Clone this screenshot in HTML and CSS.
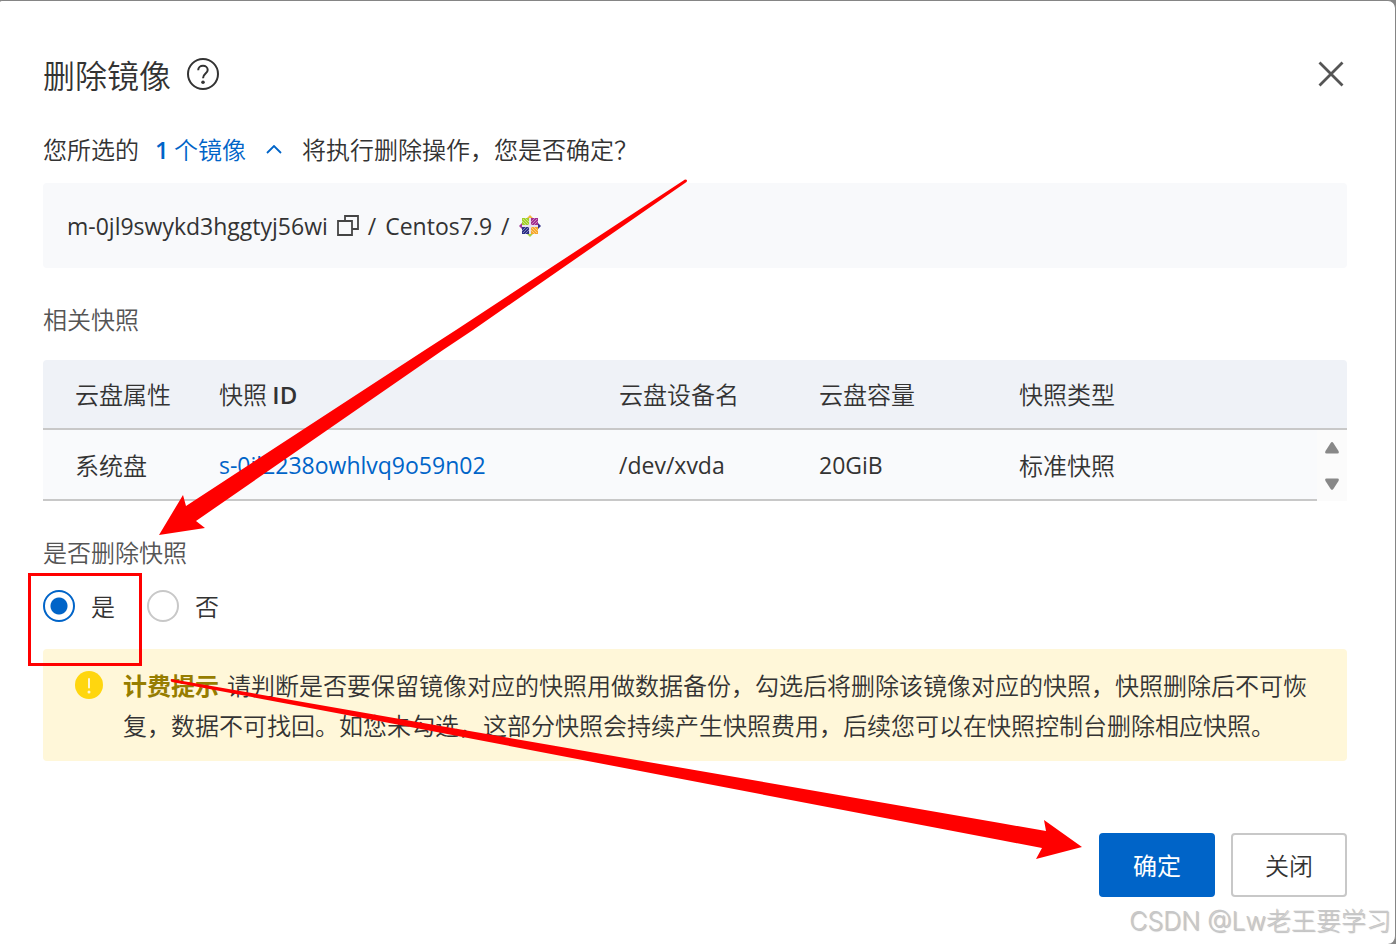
FILE: index.html
```html
<!DOCTYPE html>
<html lang="zh-CN">
<head>
    <meta charset="UTF-8">
    <meta name="viewport" content="width=device-width, initial-scale=1.0">
    <title>删除镜像</title>
    <link rel="stylesheet" href="styles.css">
</head>
<body>

    <div class="dialog" role="dialog" aria-labelledby="dialog-title">
        <!-- Title bar -->
        <div class="dialog-header">
            <h1 id="dialog-title">删除镜像</h1>
            <button class="icon-btn" type="button" aria-label="帮助">
                <svg width="32" height="32" viewBox="0 0 32 32" fill="none" stroke="#333" stroke-width="2">
                    <circle cx="16" cy="16" r="15"/>
                    <path d="M11.2 12.2C11.2 9.4 13.4 7.8 16 7.8s4.7 1.7 4.7 4.2c0 3.6-4.7 3.7-4.7 8.2"/>
                    <circle cx="16" cy="24.2" r="1.8" fill="#333" stroke="none"/>
                </svg>
            </button>
            <button class="icon-btn close-btn" type="button" aria-label="关闭对话框">
                <svg width="32" height="32" viewBox="0 0 32 32" fill="none" stroke="#555" stroke-width="2.8">
                    <path d="M4.5 4.5l23 23M27.5 4.5l-23 23"/>
                </svg>
            </button>
        </div>

        <p class="confirm-text">
            <span>您所选的</span>
            <button class="toggle-btn" type="button">
                <span><b>1</b> 个镜像</span>
                <svg width="16" height="10" viewBox="0 0 16 10" fill="none" stroke="#0064c8" stroke-width="1.8">
                    <path d="M1 8l7-7L15 8"/>
                </svg>
            </button>
            <span>将执行删除操作，您是否确定？</span>
        </p>

        <!-- Selected image -->
        <div class="image-box">
            <span class="latin">m-0jl9swykd3hggtyj56wi</span>
            <button class="icon-btn" type="button" aria-label="复制">
                <svg width="22" height="22" viewBox="0 0 22 22" fill="none" stroke="#444" stroke-width="1.8">
                    <path d="M1 6h14v14H1zM8 6V1h13v13h-6"/>
                </svg>
            </button>
            <span class="latin">/</span>
            <span class="latin">Centos7.9</span>
            <span class="latin">/</span>
            <svg width="22" height="22" viewBox="0 0 22 22">
                <path fill="#f3b63f" d="M11 0l4 4H7z"/>
                <path fill="#35328a" d="M22 11l-4 4V7z"/>
                <path fill="#a8cf45" d="M11 22l-4-4h8z"/>
                <path fill="#a03a96" d="M0 11l4-4v8z"/>
                <path fill="#a2d02c" d="M3 3h7v7H3z"/>
                <path fill="#a3308f" d="M12 3h7v7h-7z"/>
                <path fill="#2c2f86" d="M3 12h7v7H3z"/>
                <path fill="#f6a82c" d="M12 12h7v7h-7z"/>
                <path stroke="#fff" stroke-width=".7" opacity=".6" fill="none" d="M4 4l14 14M18 4L4 18M6 3l4 4M3 6l4 4M16 3l-4 4M19 6l-4 4M3 16l4-4M6 19l4-4M19 16l-4-4M16 19l-4-4"/>
                <path stroke="#e6e0ee" stroke-width="2" d="M11 3v16M3 11h16"/>
            </svg>
        </div>

        <!-- Snapshots -->
        <h2>相关快照</h2>
        <table class="snapshots">
            <colgroup>
                <col class="col-attr">
                <col class="col-id">
                <col class="col-mid">
                <col class="col-mid">
                <col>
                <col class="col-scroll">
            </colgroup>
            <thead>
                <tr>
                    <th>云盘属性</th>
                    <th>快照 <b>ID</b></th>
                    <th>云盘设备名</th>
                    <th>云盘容量</th>
                    <th colspan="2">快照类型</th>
                </tr>
            </thead>
            <tbody>
                <tr>
                    <td>系统盘</td>
                    <td><a href="#" class="latin">s-0jl2238owhlvq9o59n02</a></td>
                    <td><span class="latin">/dev/xvda</span></td>
                    <td><span class="latin">20GiB</span></td>
                    <td>标准快照</td>
                    <td class="scroll">
                        <div class="scroll-btns">
                            <button class="icon-btn" type="button" aria-label="向上滚动">
                                <svg width="14" height="12" viewBox="0 0 14 12" fill="#888"><path d="M5.5 1.2q1.5-2.2 3 0l5 7.8q1 2.5-1 2.5h-11q-2 0-1-2.5z"/></svg>
                            </button>
                            <button class="icon-btn" type="button" aria-label="向下滚动">
                                <svg width="14" height="12" viewBox="0 0 14 12" fill="#888"><path d="M5.5 10.8q1.5 2.2 3 0l5-7.8q1-2.5-1-2.5h-11q-2 0-1 2.5z"/></svg>
                            </button>
                        </div>
                    </td>
                </tr>
            </tbody>
        </table>

        <!-- Delete snapshots as well? -->
        <fieldset class="radio-group">
            <legend>是否删除快照</legend>
            <div class="radio-row">
                <label><input type="radio" name="delete-snapshot" value="yes" checked>是</label>
                <label><input type="radio" name="delete-snapshot" value="no">否</label>
            </div>
        </fieldset>

        <div class="notice">
            <svg width="28" height="28" viewBox="0 0 28 28">
                <circle cx="14" cy="14" r="14" fill="#ffd60f"/>
                <path d="M14 8v8.5" stroke="#fff6d4" stroke-width="2" stroke-linecap="round"/>
                <circle cx="14" cy="21" r="1.5" fill="#fff6d4"/>
            </svg>
            <p><strong>计费提示</strong>请判断是否要保留镜像对应的快照用做数据备份，勾选后将删除该镜像对应的快照，快照删除后不可恢复，数据不可找回。如您未勾选，这部分快照会持续产生快照费用，后续您可以在快照控制台删除相应快照。</p>
        </div>

        <div class="actions">
            <button class="btn btn-primary" type="button">确定</button>
            <button class="btn" type="button">关闭</button>
        </div>
    </div>

    <!-- Red guide marks drawn over the dialog -->
    <svg class="marks" width="1396" height="944" viewBox="0 0 1396 944" fill="#f00" aria-hidden="true">
        <path d="M685 179.5q3 0 1.5 2.5L473 330 443 350 196 521l9 7-46 7 24-40 3 11L425 350l31-20z"/>
        <path d="M171 679q-1 2 1 3L400 725l600 115 42 8-6 11 46-12-38-27 2 11-46-8L400 719z"/>
        <rect x="29.5" y="574.5" width="111" height="90" fill="none" stroke="#f00" stroke-width="3"/>
    </svg>
    <div class="watermark">CSDN @Lw老王要学习</div>

</body>
</html>
```
FILE: styles.css
```css
* {
    box-sizing: border-box;
}

body {
    font-family: 'Open Sans', 'Noto Sans CJK SC', sans-serif;
    font-size: 24px;
    line-height: 32px;
    color: #333;
    background-color: #858585;
    margin: 0;
    position: relative;
}

h1, h2, p {
    margin: 0;
    font-weight: 350;
}

button {
    font: inherit;
    color: inherit;
    cursor: pointer;
}

.dialog {
    min-height: 100vh;
    background-color: #fff;
    border-top: 1px solid #858585;
    border-right: 1px solid #858585;
    border-radius: 2px 8px 8px 0;
    padding: 49px 48px 47px 43px;
    font-family: 'Noto Sans CJK SC', sans-serif;
    font-weight: 350;
}

.latin {
    font-family: 'Open Sans', sans-serif;
    font-size: 23px;
    font-weight: 370;
}

.icon-btn {
    display: flex;
    padding: 0;
    border: none;
    background: none;
}

.dialog-header {
    display: flex;
    align-items: center;
    gap: 16px;
    height: 48px;
}

h1 {
    font-size: 32px;
    line-height: 48px;
}

.close-btn {
    margin-left: auto;
}

.confirm-text {
    display: flex;
    gap: 16px;
    margin-top: 35px;
}

.toggle-btn {
    display: flex;
    align-items: center;
    gap: 20px;
    padding: 0 4px 0 0;
    border: none;
    background: none;
    color: #0064c8;
}

.toggle-btn b,
th b {
    font-family: 'Open Sans', sans-serif;
    font-weight: 600;
}

.image-box {
    display: flex;
    align-items: center;
    gap: 9px;
    height: 85px;
    margin-top: 17px;
    padding: 0 24px;
    background-color: #f8f9fb;
    border-radius: 4px;
}

h2 {
    font-size: 24px;
    margin-top: 35px;
    color: #555;
}

/* Snapshot table */
.snapshots {
    width: 100%;
    margin-top: 25px;
    table-layout: fixed;
    border-spacing: 0;
}

.col-attr {
    width: 144px;
}

.col-id {
    width: 400px;
}

.col-mid {
    width: 200px;
}

.col-scroll {
    width: 30px;
}

th, td {
    height: 70px;
    padding: 0 0 0 32px;
    text-align: left;
    font-weight: 350;
    border-bottom: 2px solid #c8c8c8;
}

th {
    background-color: #eff2f7;
}

th:first-child {
    border-top-left-radius: 4px;
}

th:last-child {
    border-top-right-radius: 4px;
}

td {
    height: 71px;
    background-color: #f9fafc;
}

td a {
    color: #0064c8;
    text-decoration: none;
}

td.scroll {
    padding: 0;
    border-bottom: none;
    background-color: #fbfbfb;
}

.scroll-btns {
    display: flex;
    flex-direction: column;
    align-items: center;
    gap: 24px;
}

/* Radios */
.radio-group {
    margin: 35px 0 0;
    padding: 0;
    border: none;
}

legend {
    padding: 0;
    color: #555;
}

.radio-row {
    display: flex;
    gap: 32px;
    padding-top: 22px;
}

.radio-row label {
    display: flex;
    align-items: center;
    gap: 16px;
}

.radio-row input {
    appearance: none;
    width: 32px;
    height: 32px;
    margin: 0;
    border: 2px solid #c8c8c8;
    border-radius: 50%;
    background-color: #fff;
}

.radio-row input:checked {
    border-color: #0064c8;
    background: radial-gradient(circle, #0064c8 8px, #fff 9px);
}

.notice {
    display: flex;
    gap: 20px;
    margin-top: 27px;
    padding: 16px 32px;
    line-height: 40px;
    background-color: #fff7d9;
    border-radius: 4px;
}

.notice svg {
    flex: none;
    margin-top: 6px;
}

.notice strong {
    margin-right: 8px;
    color: #967d00;
    font-weight: 700;
}

.actions {
    display: flex;
    justify-content: flex-end;
    gap: 16px;
    margin-top: 72px;
}

.btn {
    width: 116px;
    height: 64px;
    padding: 0;
    border: 2px solid #c8c8c8;
    border-radius: 4px;
    background-color: #fff;
}

.btn-primary {
    border-color: #0064c8;
    background-color: #0064c8;
    color: #fff;
    font-weight: 400;
}

/* Overlays */
.marks {
    position: absolute;
    top: 0;
    left: 0;
    pointer-events: none;
}

.watermark {
    position: absolute;
    right: 5px;
    bottom: 7px;
    font-family: Inter, 'Noto Sans CJK SC', sans-serif;
    font-size: 25px;
    font-weight: 300;
    color: #c8c8c8;
    text-shadow: 1px 1px 1px #bbb;
    pointer-events: none;
}
```
